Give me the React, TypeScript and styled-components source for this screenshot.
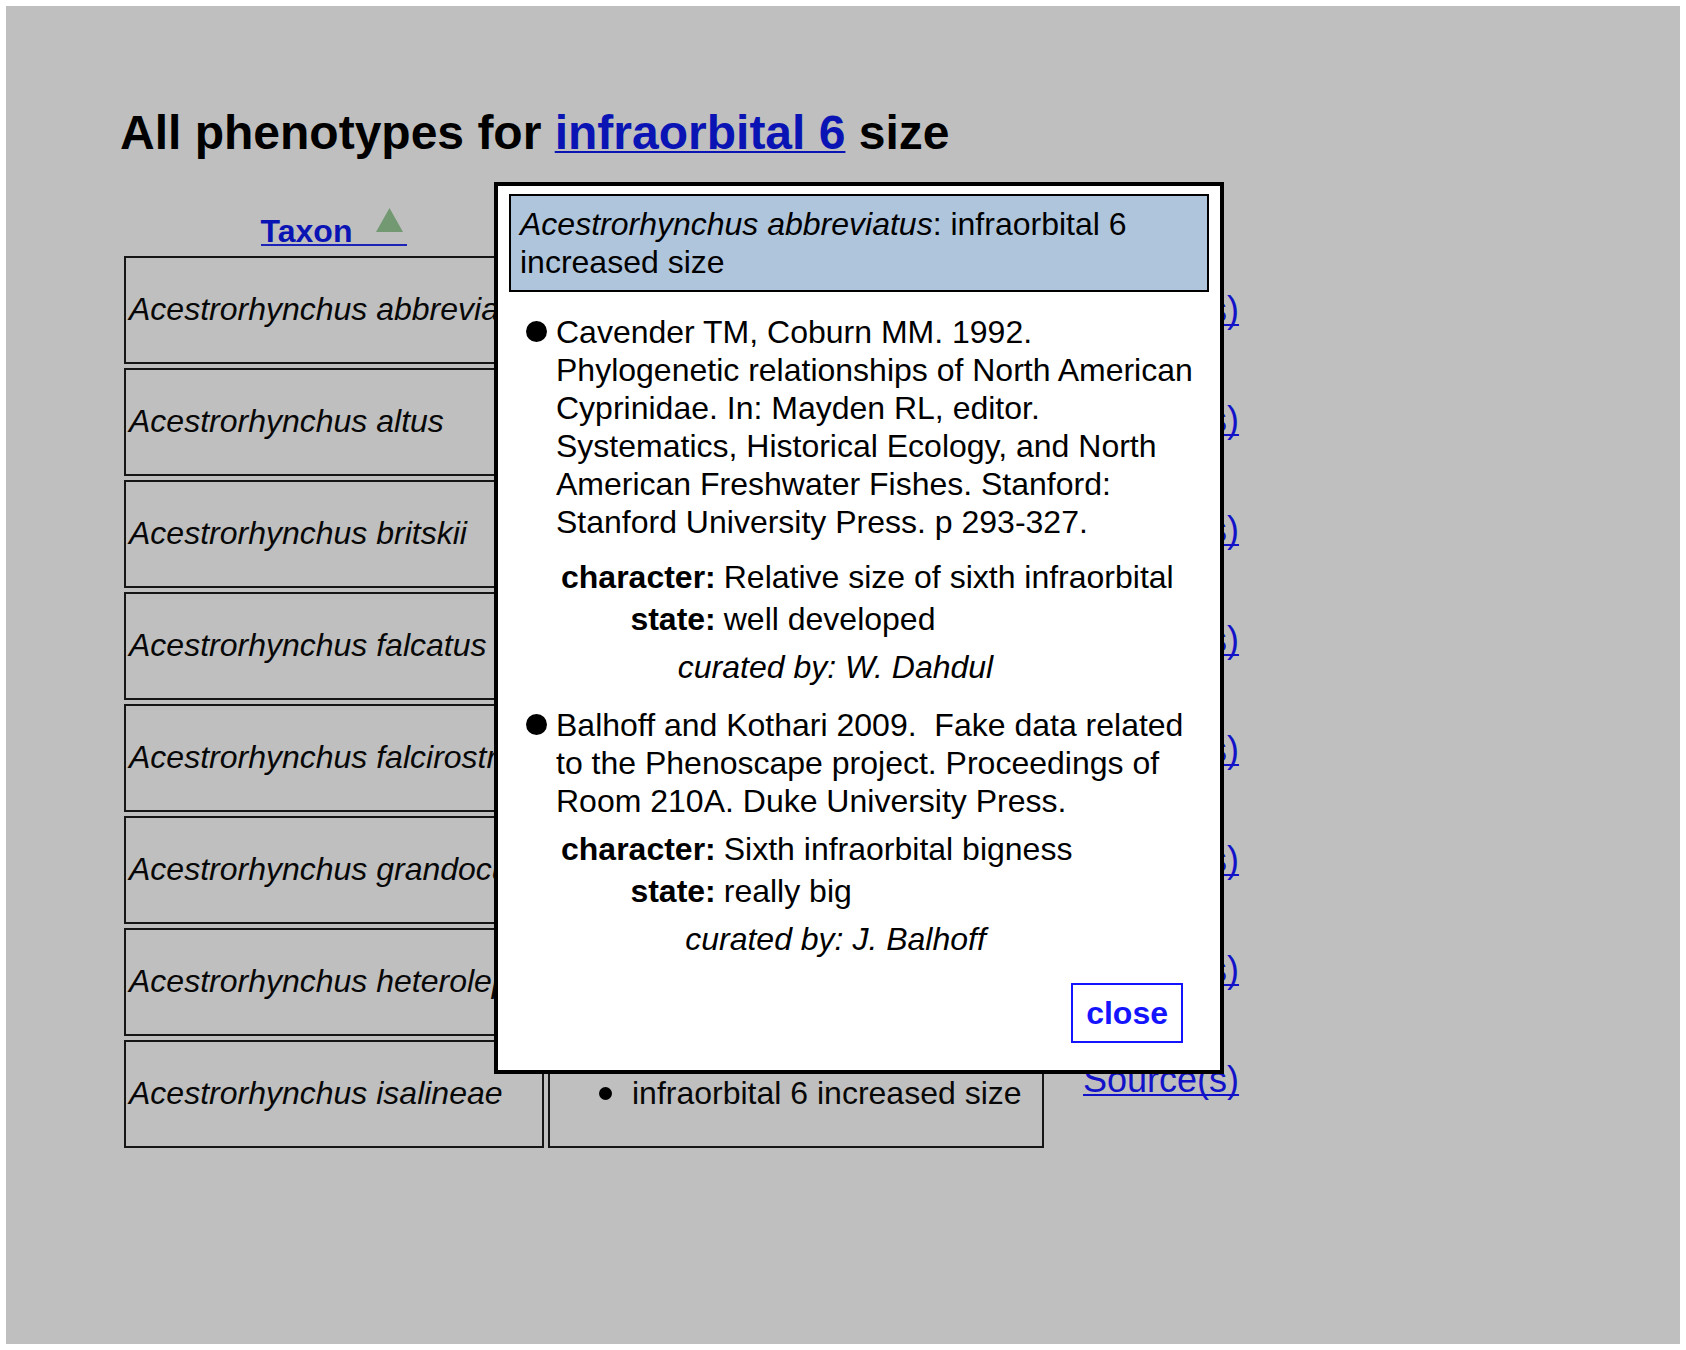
import React from 'react';
import styled, { createGlobalStyle } from 'styled-components';

const GlobalStyle = createGlobalStyle`
  * { box-sizing: border-box; }
  body {
    margin: 0;
    padding: 6px;
    background: #ffffff;
    color: #000000;
    font: 32px/38px "Liberation Sans", Arial, Helvetica, sans-serif;
  }
  h1, h2, p, ul, dl, dd { margin: 0; padding: 0; }
  ul { list-style: none; }
`;

const Page = styled.main`
  position: relative;
  min-height: calc(100vh - 12px);
  padding: 99px 114px 80px;
  background: #bfbfbf;
`;

const Title = styled.h1`
  margin-bottom: 43px;
  font-size: 48px;
  line-height: 56px;
`;

const Link = styled.a<{ $bright?: boolean }>`
  color: ${(p) => (p.$bright ? '#1212c8' : '#0a14b4')};
  text-decoration: underline 2px;
  text-decoration-skip-ink: none;
  text-underline-offset: 2px;
`;

const Results = styled.div`
  display: flex;
  align-items: flex-start;
`;

const Table = styled.table`
  flex: 0 0 auto;
  table-layout: fixed;
  width: 928px;
  border-collapse: separate;
  border-spacing: 4px;
  white-space: nowrap;
`;

const HeaderCell = styled.th<{ $width: number }>`
  width: ${(p) => p.$width}px;
  height: 44px;
  padding: 0;
  vertical-align: top;
`;

const SortLink = styled.a`
  display: inline-flex;
  gap: 24px;
  height: 38px;
  padding-right: 4px;
  border-bottom: 2px solid #1c24b8;
  color: #0a14b4;
  line-height: 46px;
  text-decoration: none;
`;

const Cell = styled.td<{ $italic?: boolean }>`
  height: 108px;
  padding: 0 0 2px 3px;
  border: 2px solid #161616;
  color: #080808;
  font-style: ${(p) => (p.$italic ? 'italic' : 'normal')};
`;

const Phenotype = styled.li`
  display: flex;
  align-items: center;
  gap: 20px;
  padding-left: 46px;

  &::before {
    content: '';
    width: 13px;
    height: 13px;
    border-radius: 50%;
    background: #000000;
  }
`;

const Sources = styled.ul`
  display: flex;
  flex-direction: column;
  gap: 68px;
  margin: 85px 0 0 35px;
  font-size: 36px;
  line-height: 42px;
`;

const Dialog = styled.section`
  position: absolute;
  top: 176px;
  left: 488px;
  width: 730px;
  padding: 8px 11px 27px;
  border: 4px solid #000000;
  background: #ffffff;
`;

const DialogTitle = styled.h2`
  margin-bottom: 21px;
  padding: 9px;
  border: 2px solid #000000;
  background: #afc5dc;
  font-size: 32px;
  font-weight: normal;
`;

const Publication = styled.article`
  display: grid;
  grid-template-columns: 21px 1fr;
  gap: 9px;
  padding: 0 4px 0 17px;

  & + & { margin-top: 20px; }
`;

const Bullet = styled.span`
  width: 21px;
  height: 21px;
  margin-top: 8px;
  border-radius: 50%;
  background: #000000;
`;

const Facts = styled.dl<{ $spacious: boolean }>`
  display: grid;
  grid-template-columns: max-content 1fr;
  gap: 4px 8px;
  margin: ${(p) => (p.$spacious ? 17 : 10)}px 0 10px 5px;

  dt { font-weight: bold; text-align: right; }
`;

const Curator = styled.p`
  padding-right: 90px;
  font-style: italic;
  text-align: center;
`;

const Actions = styled.div`
  display: flex;
  justify-content: flex-end;
  margin: 25px 26px 0 0;
`;

const CloseButton = styled.button`
  padding: 9px 13px;
  border: 2px solid #1414ff;
  background: #ffffff;
  color: #1414ff;
  font: inherit;
  font-weight: bold;
  cursor: pointer;
`;

const species = [
  'abbreviatus',
  'altus',
  'britskii',
  'falcatus',
  'falcirostris',
  'grandoculis',
  'heterolepis',
  'isalineae',
];

const publications = [
  {
    citation:
      'Cavender TM, Coburn MM. 1992. Phylogenetic relationships of North American Cyprinidae. In: Mayden RL, editor. Systematics, Historical Ecology, and North American Freshwater Fishes. Stanford: Stanford University Press. p 293-327.',
    character: 'Relative size of sixth infraorbital',
    state: 'well developed',
    curator: 'W. Dahdul',
    spacious: true,
  },
  {
    citation:
      'Balhoff and Kothari 2009.\u00a0 Fake data related to the Phenoscape project. Proceedings of Room 210A. Duke University Press.',
    character: 'Sixth infraorbital bigness',
    state: 'really big',
    curator: 'J. Balhoff',
    spacious: false,
  },
];

export default function App() {
  const [open, setOpen] = React.useState(true);

  return (
    <>
      <GlobalStyle />
      <Page>
        <Title>
          All phenotypes for <Link href="#infraorbital-6">infraorbital 6</Link> size
        </Title>
        <Results>
          <Table>
            <thead>
              <tr>
                <HeaderCell $width={420} scope="col">
                  <SortLink href="#sort-taxon">
                    Taxon
                    <svg width="27" height="24" viewBox="0 0 27 24" aria-hidden="true">
                      <path d="M13.5 0 27 24H0Z" fill="#739973" />
                    </svg>
                  </SortLink>
                </HeaderCell>
                <HeaderCell $width={496} scope="col" aria-label="Phenotype" />
              </tr>
            </thead>
            <tbody>
              {species.map((name) => (
                <tr key={name}>
                  <Cell $italic>Acestrorhynchus {name}</Cell>
                  <Cell>
                    <ul>
                      <Phenotype>infraorbital 6 increased size</Phenotype>
                    </ul>
                  </Cell>
                </tr>
              ))}
            </tbody>
          </Table>
          <Sources>
            {species.map((name) => (
              <li key={name}>
                <Link $bright href={`#sources-${name}`} onClick={() => setOpen(true)}>
                  Source(s)
                </Link>
              </li>
            ))}
          </Sources>
        </Results>

        {open && (
          <Dialog role="dialog" aria-labelledby="dialog-title">
            <DialogTitle id="dialog-title">
              <em>Acestrorhynchus abbreviatus</em>: infraorbital 6 increased size
            </DialogTitle>
            {publications.map((pub) => (
              <Publication key={pub.curator}>
                <Bullet />
                <div>
                  <p>{pub.citation}</p>
                  <Facts $spacious={pub.spacious}>
                    <dt>character:</dt>
                    <dd>{pub.character}</dd>
                    <dt>state:</dt>
                    <dd>{pub.state}</dd>
                  </Facts>
                  <Curator>curated by: {pub.curator}</Curator>
                </div>
              </Publication>
            ))}
            <Actions>
              <CloseButton type="button" onClick={() => setOpen(false)}>close</CloseButton>
            </Actions>
          </Dialog>
        )}
      </Page>
    </>
  );
}
